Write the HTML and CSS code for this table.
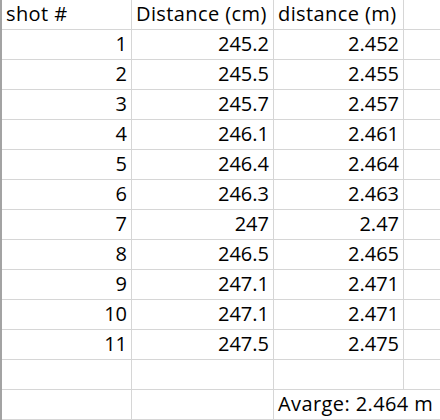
FILE: index.html
```html
<!DOCTYPE html>
<html>
<head>
<meta charset="utf-8">
<link rel="stylesheet" href="styles.css">
</head>
<body>
<div class="sheet">
  <div class="c t">shot #</div><div class="c t">Distance (cm)</div><div class="c t">distance (m)</div><div class="c d"></div>
  <div class="c n">1</div><div class="c n">245.2</div><div class="c n">2.452</div><div class="c d"></div>
  <div class="c n">2</div><div class="c n">245.5</div><div class="c n">2.455</div><div class="c d"></div>
  <div class="c n">3</div><div class="c n">245.7</div><div class="c n">2.457</div><div class="c d"></div>
  <div class="c n">4</div><div class="c n">246.1</div><div class="c n">2.461</div><div class="c d"></div>
  <div class="c n">5</div><div class="c n">246.4</div><div class="c n">2.464</div><div class="c d"></div>
  <div class="c n">6</div><div class="c n">246.3</div><div class="c n">2.463</div><div class="c d"></div>
  <div class="c n">7</div><div class="c n">247</div><div class="c n">2.47</div><div class="c d"></div>
  <div class="c n">8</div><div class="c n">246.5</div><div class="c n">2.465</div><div class="c d"></div>
  <div class="c n">9</div><div class="c n">247.1</div><div class="c n">2.471</div><div class="c d"></div>
  <div class="c n">10</div><div class="c n">247.1</div><div class="c n">2.471</div><div class="c d"></div>
  <div class="c n">11</div><div class="c n">247.5</div><div class="c n">2.475</div><div class="c d"></div>
  <div class="c"></div><div class="c"></div><div class="c"></div><div class="c d"></div>
  <div class="c"></div><div class="c"></div><div class="c t span">Avarge: 2.464 m</div>
</div>
</body>
</html>
```
FILE: styles.css
```css
html, body {
  margin: 0;
  padding: 0;
  background: #fff;
  overflow: hidden;
}
.sheet {
  box-sizing: border-box;
  width: 440px;
  height: 420px;
  border-left: 2px solid #a3a3a3;
  display: grid;
  grid-template-columns: 130px 142px 130px 1fr;
  grid-auto-rows: 30px;
  font-family: "Open Sans", sans-serif;
  font-size: 20px;
  color: #000;
}
.c {
  box-sizing: border-box;
  border-right: 1px solid #d6d6d6;
  border-bottom: 1px solid #d6d6d6;
  line-height: 28px;
  white-space: nowrap;
}
.d {
  border-right: none;
}
.n {
  text-align: right;
  padding-right: 4px;
}
.t {
  text-align: left;
  padding-left: 4px;
  letter-spacing: 0.4px;
}
.span {
  grid-column: span 2;
  border-right: none;
}
```
